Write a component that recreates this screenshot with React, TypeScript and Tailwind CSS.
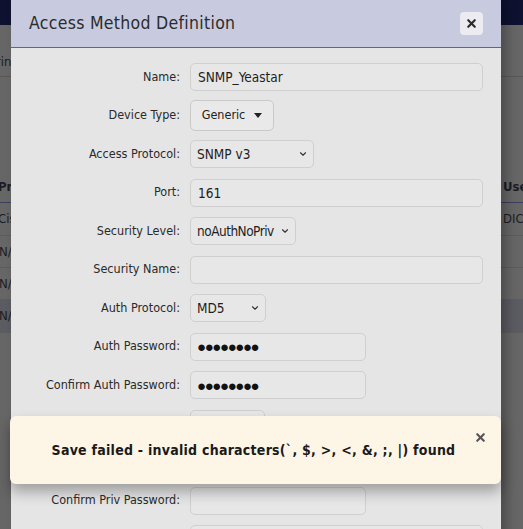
import { ChevronDown, X } from "lucide-react";

type Field =
  | { label: string; kind: "text"; value?: string; width: number }
  | { label: string; kind: "password"; width: number; filled: boolean }
  | { label: string; kind: "select"; value: string; width: number; tight?: boolean }
  | { label: string; kind: "menu"; value: string; width: number };

const fields: Field[] = [
  { label: "Name:", kind: "text", value: "SNMP_Yeastar", width: 293 },
  { label: "Device Type:", kind: "menu", value: "Generic", width: 84 },
  { label: "Access Protocol:", kind: "select", value: "SNMP v3", width: 124 },
  { label: "Port:", kind: "text", value: "161", width: 293 },
  { label: "Security Level:", kind: "select", value: "noAuthNoPriv", width: 106, tight: true },
  { label: "Security Name:", kind: "text", width: 293 },
  { label: "Auth Protocol:", kind: "select", value: "MD5", width: 76 },
  { label: "Auth Password:", kind: "password", width: 176, filled: true },
  { label: "Confirm Auth Password:", kind: "password", width: 176, filled: true },
  { label: "Priv Protocol:", kind: "select", value: "DES", width: 75 },
  { label: "Priv Password:", kind: "password", width: 176, filled: false },
  { label: "Confirm Priv Password:", kind: "password", width: 176, filled: false },
  { label: "Description:", kind: "text", width: 293 },
];

function Control({ field }: { field: Field }) {
  const box =
    "flex h-[28px] items-center rounded-[5px] border border-[#cfcfcf] bg-[#e7e7e7] text-[13.5px] text-[#1e1e1e]";

  if (field.kind === "menu") {
    return (
      <div
        className="flex h-[31px] items-center justify-center gap-[9px] rounded-[5px] border border-[#c9c9c9] bg-[#e9e9e9] text-[12.5px] text-[#222]"
        style={{ width: field.width }}
      >
        <span>{field.value}</span>
        <span className="h-0 w-0 border-x-[4px] border-t-[5px] border-x-transparent border-t-[#222]" />
      </div>
    );
  }

  if (field.kind === "select") {
    return (
      <div className={`${box} justify-between pl-[6px] pr-[5px]`} style={{ width: field.width }}>
        <span className={field.tight ? "tracking-[-0.5px]" : ""}>{field.value}</span>
        <ChevronDown size={10} strokeWidth={2.6} className="text-[#333]" />
      </div>
    );
  }

  if (field.kind === "password") {
    return (
      <div className={`${box} pl-[6px]`} style={{ width: field.width }}>
        {field.filled ? (
          <span className="font-['Noto_Sans',sans-serif] text-[15px] leading-none tracking-[-1.4px] text-[#111]">
            ●●●●●●●●
          </span>
        ) : null}
      </div>
    );
  }

  return (
    <div className={`${box} pl-[7px]`} style={{ width: field.width }}>
      {field.value}
    </div>
  );
}

export default function App() {
  return (
    <div className="relative h-[529px] w-[523px] overflow-hidden bg-[#666666] font-['DejaVu_Sans_Condensed','Lato',sans-serif] text-[#1c1c24]">
      {/* page behind the dimmed overlay */}
      <div className="h-[25px] bg-[#0e1230]" />
      <div className="flex h-[52px] items-end border-b border-[#585858] pb-[5px] text-[13px]">
        <span className="-ml-[11px]">Print</span>
      </div>
      <div className="mt-[95px] text-[13px]">
        <div className="flex h-[31px] items-center justify-between border-b border-[#3b3e5c] font-semibold">
          <span className="-ml-[2px]">Protocol</span>
          <span className="w-[20px]">User</span>
        </div>
        <div className="flex h-[33px] items-center justify-between border-b border-[#5c5c5c]">
          <span className="-ml-[2px]">Cisco</span>
          <span className="w-[20px]">DIC</span>
        </div>
        <div className="flex h-[32px] items-center border-b border-[#5c5c5c]">
          <span className="-ml-[1px]">N/A</span>
        </div>
        <div className="flex h-[32px] items-center border-b border-[#5c5c5c]">
          <span className="-ml-[1px]">N/A</span>
        </div>
        <div className="flex h-[33px] items-center border-b border-[#5c5c5c] bg-[#5b5b62]">
          <span className="-ml-[1px]">N/A</span>
        </div>
      </div>

      {/* dialog */}
      <div className="absolute left-[11px] top-0 w-[490px] bg-[#e5e5e5] shadow-[6px_0_10px_rgba(0,0,0,0.25)]">
        <div className="flex h-[48px] items-center justify-between border-b-[1.5px] border-[#5a63a6] bg-[#c8cbdf] pl-[18px] pr-[18px]">
          <h1 className="text-[17.5px] tracking-[0.3px] text-[#2b2b2b]">Access Method Definition</h1>
          <button className="flex h-[23px] w-[23px] items-center justify-center rounded-[4px] bg-[#ebebf1]">
            <X size={13} strokeWidth={4} className="text-[#2b2b2b]" />
          </button>
        </div>
        <div className="pt-[10px]">
          {fields.map((field) => (
            <div key={field.label} className="flex h-[38.5px] items-center">
              <label className="w-[179px] shrink-0 pr-[10px] text-right text-[12.5px] text-[#2a2a2a]">
                {field.label}
              </label>
              <Control field={field} />
            </div>
          ))}
        </div>
      </div>

      {/* save error toast */}
      <div className="absolute left-[10px] top-[416px] flex h-[68px] w-[491px] items-center justify-center rounded-[6px] bg-[#fdf6e6] shadow-[0_8px_14px_rgba(0,0,0,0.3)]">
        <p className="pr-[4px] text-[14px] font-bold tracking-[0.25px] text-[#1a1a1a]">
          Save failed - invalid characters(`, $, &gt;, &lt;, &amp;, ;, |) found
        </p>
        <X size={13} strokeWidth={4} className="absolute right-[14px] top-[15px] text-[#555]" />
      </div>
    </div>
  );
}
